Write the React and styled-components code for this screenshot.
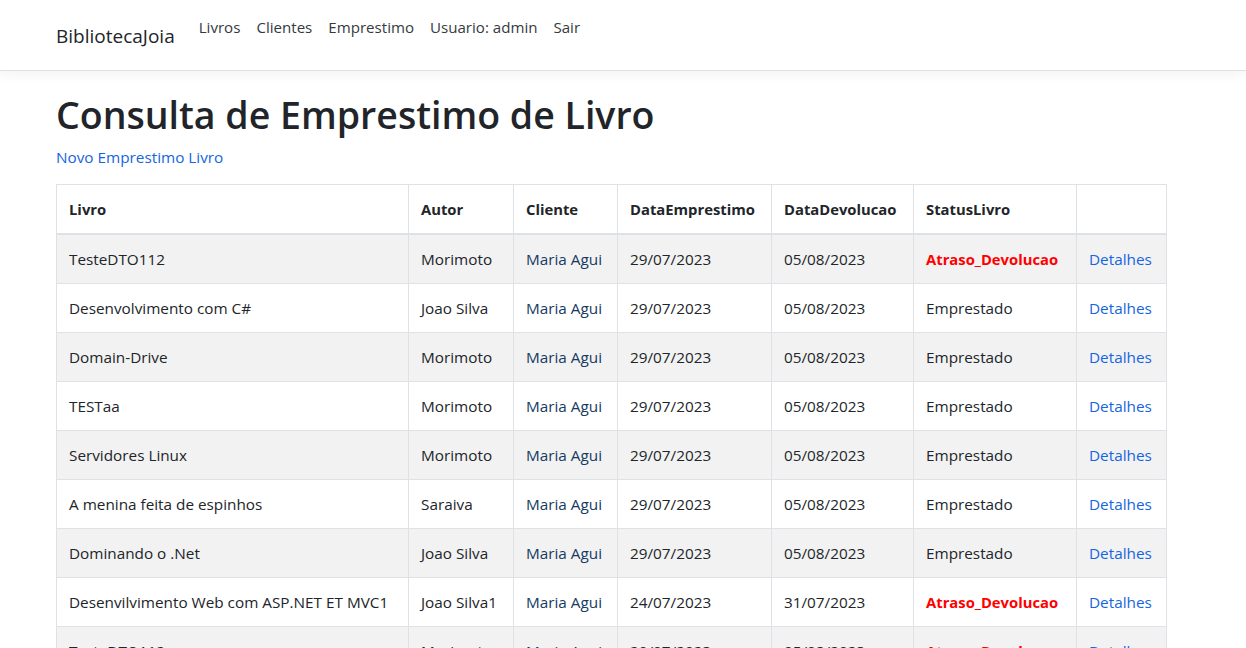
import React from 'react';
import styled, { createGlobalStyle } from 'styled-components';

const GlobalStyle = createGlobalStyle`
  html, body {
    margin: 0;
    padding: 0;
    background: #fff;
  }
  body {
    font-family: "Open Sans", "Noto Sans", Arial, sans-serif;
    font-size: 15.3px;
    line-height: 24px;
    color: #212529;
  }
  * { box-sizing: border-box; }
`;

const Navbar = styled.header`
  height: 71px;
  background: #fff;
  border-bottom: 1px solid #dee2e6;
  box-shadow: 0 0.25rem 0.75rem rgba(0, 0, 0, 0.05);
`;

const NavInner = styled.nav`
  display: flex;
  align-items: flex-start;
  padding-left: 56px;
`;

const Brand = styled.a`
  padding-top: 21px;
  margin-right: 16px;
  font-size: 19px;
  line-height: 30px;
  color: #212529;
  text-decoration: none;
`;

const NavList = styled.ul`
  display: flex;
  list-style: none;
  margin: 0;
  padding: 7px 0 0;
`;

const NavLink = styled.a`
  display: block;
  padding: 8px 8px;
  font-size: 15.1px;
  line-height: 24px;
  color: #343a40;
  text-decoration: none;
`;

const Main = styled.main`
  width: 1110px;
  margin-left: 56px;
  padding-top: 20px;
`;

const Title = styled.h1`
  margin: 0 0 6px;
  font-size: 37.5px;
  font-weight: 600;
  line-height: 48px;
`;

const Lead = styled.p`
  margin: 0 0 15px;
`;

const Link = styled.a`
  color: #1565e0;
  text-decoration: none;
`;

const Table = styled.table`
  width: 1110px;
  table-layout: fixed;
  border-collapse: collapse;
  border: 1px solid #dee2e6;
`;

const Th = styled.th`
  width: ${p => p.w}px;
  padding: 12px;
  text-align: left;
  font-size: 14.8px;
  font-weight: 700;
  border: 1px solid #dee2e6;
  border-bottom: 2px solid #dee2e6;
  white-space: nowrap;
`;

const Row = styled.tr`
  background: ${p => (p.striped ? '#f2f2f2' : '#fff')};
`;

const Td = styled.td`
  padding: 12px;
  border: 1px solid #dee2e6;
  white-space: nowrap;
  overflow: hidden;
`;

const Client = styled.span`
  color: #173a63;
`;

const Status = styled.span`
  color: ${p => (p.late ? '#ff0000' : '#212529')};
  font-weight: ${p => (p.late ? 700 : 400)};
  font-size: ${p => (p.late ? '14.8px' : 'inherit')};
`;

const columns = [
  ['Livro', 352],
  ['Autor', 105],
  ['Cliente', 104],
  ['DataEmprestimo', 154],
  ['DataDevolucao', 142],
  ['StatusLivro', 163],
  ['', 90],
];

const LATE = 'Atraso_Devolucao';
const LENT = 'Emprestado';

const rows = [
  ['TesteDTO112', 'Morimoto', '29/07/2023', '05/08/2023', LATE],
  ['Desenvolvimento com C#', 'Joao Silva', '29/07/2023', '05/08/2023', LENT],
  ['Domain-Drive', 'Morimoto', '29/07/2023', '05/08/2023', LENT],
  ['TESTaa', 'Morimoto', '29/07/2023', '05/08/2023', LENT],
  ['Servidores Linux', 'Morimoto', '29/07/2023', '05/08/2023', LENT],
  ['A menina feita de espinhos', 'Saraiva', '29/07/2023', '05/08/2023', LENT],
  ['Dominando o .Net', 'Joao Silva', '29/07/2023', '05/08/2023', LENT],
  ['Desenvilvimento Web com ASP.NET ET MVC1', 'Joao Silva1', '24/07/2023', '31/07/2023', LATE],
  ['TesteDTO112', 'Morimoto', '29/07/2023', '05/08/2023', LATE],
];

export default function App() {
  return (
    <>
      <GlobalStyle />
      <Navbar>
        <NavInner>
          <Brand href="#">BibliotecaJoia</Brand>
          <NavList>
            {['Livros', 'Clientes', 'Emprestimo', 'Usuario: admin', 'Sair'].map(item => (
              <li key={item}>
                <NavLink href="#">{item}</NavLink>
              </li>
            ))}
          </NavList>
        </NavInner>
      </Navbar>

      <Main>
        <Title>Consulta de Emprestimo de Livro</Title>
        <Lead>
          <Link href="#">Novo Emprestimo Livro</Link>
        </Lead>

        <Table>
          <thead>
            <tr>
              {columns.map(([label, w]) => (
                <Th key={label || 'actions'} w={w}>{label}</Th>
              ))}
            </tr>
          </thead>
          <tbody>
            {rows.map(([book, author, start, end, status], i) => (
              <Row key={i} striped={i % 2 === 0}>
                <Td>{book}</Td>
                <Td>{author}</Td>
                <Td><Client>Maria Agui</Client></Td>
                <Td>{start}</Td>
                <Td>{end}</Td>
                <Td><Status late={status === LATE}>{status}</Status></Td>
                <Td><Link href="#">Detalhes</Link></Td>
              </Row>
            ))}
          </tbody>
        </Table>
      </Main>
    </>
  );
}
